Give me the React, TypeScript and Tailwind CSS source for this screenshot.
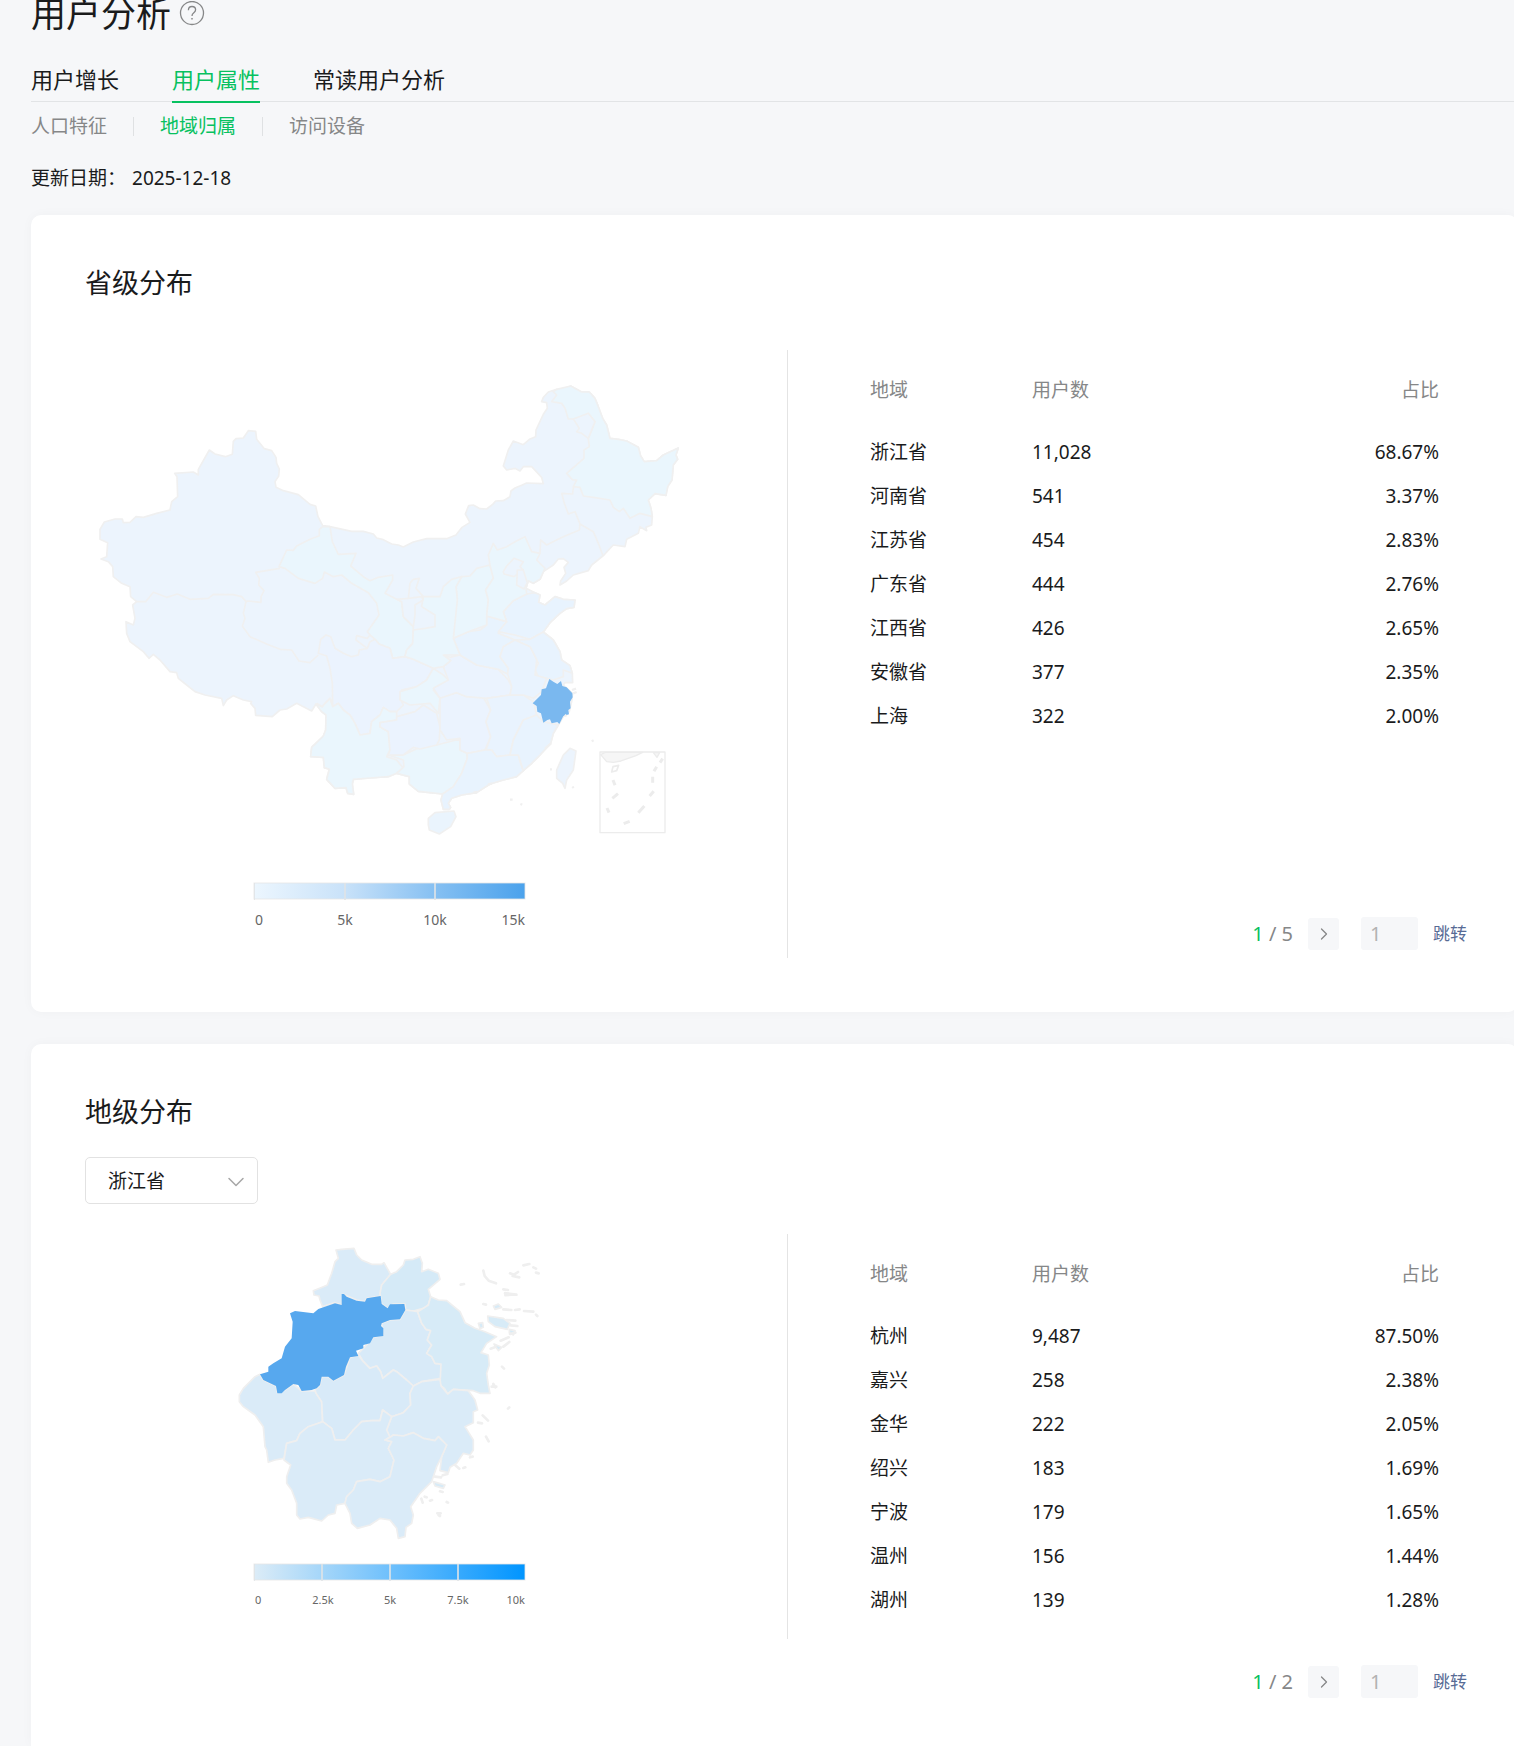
import { useState } from "react"
import { ChevronDown, ChevronRight } from "lucide-react"

type Region = { name: string; users: string; share: string }
type Shape = { name: string; fill: string; points: string }
type Tick = { x: number; label: string; anchor: "start" | "middle" | "end" }

const provinces: Region[] = [
  { name: "浙江省", users: "11,028", share: "68.67%" },
  { name: "河南省", users: "541", share: "3.37%" },
  { name: "江苏省", users: "454", share: "2.83%" },
  { name: "广东省", users: "444", share: "2.76%" },
  { name: "江西省", users: "426", share: "2.65%" },
  { name: "安徽省", users: "377", share: "2.35%" },
  { name: "上海", users: "322", share: "2.00%" },
]

const cities: Region[] = [
  { name: "杭州", users: "9,487", share: "87.50%" },
  { name: "嘉兴", users: "258", share: "2.38%" },
  { name: "金华", users: "222", share: "2.05%" },
  { name: "绍兴", users: "183", share: "1.69%" },
  { name: "宁波", users: "179", share: "1.65%" },
  { name: "温州", users: "156", share: "1.44%" },
  { name: "湖州", users: "139", share: "1.28%" },
]

const mainland =
  "60,478 73,456 105,447 127,447 130,458 150,457 168,440 190,442 230,430 270,420 275,395 293,380 291,320 284,310 340,306 355,315 355,298 388,240 405,252 436,260 457,253 460,214 468,206 490,204 505,182 527,184 530,208 553,236 575,242 588,262 590,280 598,297 596,318 585,335 588,352 610,362 655,374 690,403 707,408 714,440 728,467 750,470 815,484 850,484 880,492 890,504 910,509 935,522 955,525 970,531 1000,516 1040,506 1100,506 1128,495 1145,473 1170,457 1156,432 1166,407 1180,405 1200,416 1220,417 1238,403 1247,393 1270,392 1290,380 1293,363 1305,354 1325,346 1340,339 1390,341 1385,322 1355,290 1330,290 1320,303 1305,295 1280,300 1270,288 1285,240 1300,213 1330,224 1350,207 1367,200 1368,180 1390,133 1402,115 1400,98 1385,95 1390,82 1405,66 1430,58 1460,54 1472,48 1490,58 1505,66 1528,66 1545,85 1555,110 1568,145 1580,165 1590,205 1615,208 1640,213 1675,232 1682,258 1693,275 1730,272 1750,255 1795,234 1788,255 1793,268 1780,285 1776,330 1763,350 1758,376 1725,371 1705,390 1713,415 1717,440 1715,465 1698,472 1700,482 1680,470 1675,490 1640,508 1635,530 1600,525 1590,535 1572,555 1535,585 1525,602 1480,615 1460,633 1440,645 1442,633 1457,610 1452,592 1465,577 1450,566 1435,567 1420,585 1390,605 1380,628 1360,640 1345,632 1338,655 1365,668 1380,675 1376,697 1395,705 1425,680 1450,688 1485,690 1482,712 1460,716 1440,730 1410,758 1390,786 1420,810 1440,845 1445,870 1470,887 1477,910 1478,938 1455,938 1450,945 1478,970 1475,995 1468,1025 1450,1040 1435,1065 1420,1090 1412,1120 1380,1155 1355,1180 1330,1202 1310,1220 1270,1230 1230,1242 1190,1268 1145,1275 1115,1285 1105,1300 1112,1312 1108,1318 1090,1318 1083,1290 1088,1272 1050,1268 1015,1264 988,1242 988,1220 950,1210 925,1220 870,1224 820,1228 817,1242 821,1273 803,1270 798,1253 765,1255 740,1228 748,1198 733,1193 730,1162 692,1160 695,1132 730,1098 737,1080 738,1035 725,1025 708,1002 695,1023 650,1000 620,1017 600,1020 577,1040 527,1036 525,1015 512,1000 515,995 490,990 460,977 440,990 430,1007 425,985 375,975 345,965 320,945 295,925 290,908 270,905 240,870 220,853 207,865 190,845 150,815 140,790 138,755 160,765 165,745 158,705 170,695 152,680 150,650 125,640 100,620 98,590 85,575 63,567 80,560 83,518 60,508"

const provinceShapes: Shape[] = [
  { name: "甘肃", fill: "#eaf6fd", points: "728,470 718,478 718,497 690,508 650,528 640,541 620,540 597,590 615,595 655,625 705,640 728,625 733,606 760,620 785,615 815,640 865,668 890,700 897,735 862,785 870,795 885,808 897,822 930,835 938,865 975,860 980,840 998,820 1000,770 970,740 965,695 950,688 915,670 938,630 938,615 895,622 870,632 850,620 812,588 828,550 775,553 757,515 750,470" },
  { name: "四川", fill: "#ebf3fe", points: "738,795 752,800 765,835 790,850 815,860 835,855 838,840 862,835 870,815 885,808 897,822 930,835 938,865 975,860 1000,868 1060,895 1040,930 1010,950 965,960 960,985 970,1005 950,1025 930,1025 910,1012 900,1035 875,1055 870,1090 840,1095 825,1060 810,1035 790,1020 775,1000 758,1010 757,940 750,895 740,858 715,850 722,808" },
  { name: "云南", fill: "#eaf6fd", points: "708,1002 725,1025 738,1035 737,1080 730,1098 695,1132 692,1160 730,1162 733,1193 748,1198 740,1228 765,1255 798,1253 803,1270 821,1273 817,1242 820,1228 870,1224 925,1220 950,1210 970,1195 950,1170 920,1160 930,1140 925,1085 900,1070 900,1058 950,1050 950,1025 930,1025 910,1012 900,1035 875,1055 870,1090 840,1095 825,1060 810,1035 790,1020 775,1000 758,1010 750,985 735,1000 727,1010" },
  { name: "广西", fill: "#eaf6fd", points: "925,1155 970,1170 972,1190 950,1210 988,1220 988,1242 1015,1264 1050,1268 1088,1272 1120,1250 1145,1210 1162,1165 1160,1150 1140,1140 1140,1107 1070,1125 1020,1132 970,1155" },
  { name: "贵州", fill: "#ebf3fe", points: "925,1155 970,1155 1000,1132 1020,1137 1070,1125 1078,1110 1080,1070 1070,1030 1030,1005 1005,1025 950,1040 950,1050 900,1058 900,1070 925,1085 930,1140" },
  { name: "重庆", fill: "#eaf6fd", points: "1060,895 1090,915 1105,930 1100,942 1060,960 1080,985 1075,1030 1050,1000 990,1005 960,990 960,965 1010,950 1040,930" },
  { name: "湖南", fill: "#ebf3fe", points: "1080,980 1130,968 1160,980 1210,982 1232,1020 1218,1055 1232,1100 1215,1140 1162,1150 1140,1140 1140,1105 1100,1110 1080,1080" },
  { name: "湖北", fill: "#ebf3fe", points: "1090,855 1110,862 1140,855 1190,885 1255,898 1285,930 1295,950 1290,975 1220,985 1160,980 1130,968 1080,985 1060,955 1105,930 1090,890 1112,872" },
  { name: "江西", fill: "#e9f3fe", points: "1220,985 1290,975 1330,975 1360,995 1370,1035 1330,1050 1300,1110 1290,1155 1250,1160 1235,1140 1218,1140 1232,1100 1218,1055 1232,1020" },
  { name: "广东", fill: "#e8f3fe", points: "1235,1140 1215,1140 1162,1150 1162,1165 1145,1210 1120,1250 1088,1272 1083,1290 1090,1318 1108,1318 1112,1312 1105,1300 1115,1285 1145,1275 1190,1268 1230,1242 1270,1230 1310,1220 1330,1202 1320,1175 1315,1155 1290,1155 1250,1160" },
  { name: "福建", fill: "#e8f3fe", points: "1370,1035 1330,1050 1300,1110 1290,1155 1315,1155 1330,1202 1355,1180 1380,1155 1412,1120 1420,1090 1435,1065 1390,1055" },
  { name: "河南", fill: "#e8f3fe", points: "1120,805 1165,785 1200,780 1220,765 1220,738 1280,755 1255,790 1305,810 1270,830 1260,860 1285,895 1283,912 1255,898 1190,885 1140,855" },
  { name: "山东", fill: "#e8f3fe", points: "1280,755 1270,725 1300,692 1340,672 1365,668 1380,675 1376,697 1395,705 1425,680 1450,688 1485,690 1482,712 1460,716 1440,730 1410,758 1390,786 1350,808 1305,795 1255,785" },
  { name: "江苏", fill: "#e8f3fe", points: "1305,810 1350,808 1390,786 1420,810 1440,845 1445,870 1470,887 1477,910 1450,900 1450,920 1420,930 1375,920 1365,900 1375,880 1370,870 1350,830" },
  { name: "安徽", fill: "#e9f3fe", points: "1305,810 1350,830 1370,870 1365,915 1400,925 1385,965 1360,985 1330,975 1290,975 1295,950 1283,912 1285,895 1260,860 1270,830" },
  { name: "山西", fill: "#eaf6fd", points: "1145,620 1170,618 1190,595 1230,585 1240,625 1217,660 1225,690 1220,738 1220,765 1165,785 1120,805 1122,740 1132,690 1128,650" },
  { name: "陕西", fill: "#eaf6fd", points: "1145,620 1128,650 1132,690 1120,805 1140,855 1090,855 1112,872 1090,890 1060,895 1000,868 975,860 980,840 998,820 1000,780 1035,775 1065,770 1065,735 1025,710 1030,680 1080,680 1090,650 1115,628" },
  { name: "宁夏", fill: "#ecf4fd", points: "950,688 985,685 1025,680 1030,690 1005,705 1005,735 1000,770 970,740 965,695" },
  { name: "河北", fill: "#eaf6fd", points: "1240,520 1252,540 1280,530 1305,515 1335,500 1355,545 1380,550 1370,570 1395,595 1380,628 1360,640 1345,632 1338,655 1340,672 1300,692 1270,725 1280,755 1220,738 1225,690 1217,660 1240,625 1230,585 1225,555" },
  { name: "北京", fill: "#ecf4fd", points: "1270,605 1280,588 1302,565 1330,575 1320,590 1330,600 1302,620 1272,612" },
  { name: "天津", fill: "#ecf4fd", points: "1312,600 1330,600 1342,638 1332,657 1310,645" },
  { name: "黑龙江", fill: "#eaf6fd", points: "1420,65 1430,75 1415,95 1445,100 1455,115 1465,147 1480,147 1505,143 1525,130 1545,155 1525,205 1528,230 1512,240 1512,265 1460,310 1478,330 1490,330 1480,350 1500,352 1510,378 1540,382 1590,390 1600,412 1618,425 1630,415 1650,445 1680,430 1717,440 1713,415 1705,390 1725,371 1758,376 1763,350 1776,330 1780,285 1793,268 1788,255 1795,234 1750,255 1730,272 1693,275 1682,258 1675,232 1640,213 1615,208 1590,205 1580,165 1568,145 1555,110 1545,85 1528,66 1505,66 1490,58 1472,48 1430,58" },
  { name: "大兴安岭", fill: "#ecf4fd", points: "1480,147 1525,130 1545,155 1525,205 1505,190 1490,185 1498,175" },
]

const provinceBorders = [
  "600,595 527,607 538,625 536,645 552,662 543,680 543,697 505,693 498,695",
  "170,695 197,695 220,667 260,682 292,672 330,688 385,685 400,673 460,674 485,680 498,695 490,730 495,745 487,768 510,800 560,822 600,838 635,840 657,873 690,878 715,855",
  "862,835 828,810 830,797 862,805 870,795",
  "757,1000 750,985 735,1000 727,1010 710,1000",
  "1480,350 1478,372 1445,370 1453,400 1465,432 1485,425 1500,462 1540,485 1555,520 1568,555",
  "1500,462 1498,480 1450,500 1425,512 1400,525 1382,510 1380,550",
  "985,685 990,640 1000,628 1018,625 1008,655 1030,680",
]

const zhejiangShapes: Shape[] = [
  { name: "湖州", fill: "#daebf8", points: "348,60 365,58 402,55 410,75 425,90 455,103 485,103 492,98 500,112 512,133 485,165 480,198 440,205 435,215 410,210 370,193 365,225 345,218 308,230 300,210 297,198 282,195 280,182 310,170 322,165 335,130 345,95 355,85" },
  { name: "嘉兴", fill: "#d5eaf7", points: "512,133 530,125 550,105 555,90 580,88 600,80 607,100 605,125 625,118 655,130 660,148 625,178 632,200 625,225 610,235 580,243 557,240 555,222 520,222 503,235 485,222 480,190 485,165" },
  { name: "绍兴", fill: "#d8eaf8", points: "556,240 580,243 593,245 605,280 618,298 632,302 622,330 635,345 620,370 635,380 645,400 663,402 663,445 605,455 580,468 560,450 530,425 520,420 488,445 482,425 470,408 450,415 430,395 415,370 430,355 460,322 490,315 485,280 510,270 540,268" },
  { name: "宁波", fill: "#d7ebf7", points: "593,245 610,235 625,225 632,200 655,210 680,212 720,245 735,278 765,295 795,305 830,320 800,340 783,368 805,375 808,405 800,430 805,465 810,490 780,490 760,482 700,478 683,492 673,475 660,465 663,402 645,400 635,380 620,370 635,345 622,330 632,302 618,298 605,280" },
  { name: "衢州", fill: "#daebf8", points: "120,433 130,450 168,468 172,488 195,480 220,462 245,483 285,483 305,515 308,575 265,590 240,610 230,632 200,640 192,685 165,690 145,697 140,660 135,650 130,590 105,555 70,530 58,515 58,495 70,475 90,455 105,440" },
  { name: "金华", fill: "#d8eaf8", points: "285,480 300,465 305,440 325,440 340,452 372,435 390,382 415,375 430,395 450,415 470,408 482,425 488,445 520,420 530,425 560,450 580,468 570,490 572,525 550,548 515,560 488,540 480,572 455,572 425,575 400,600 375,630 345,630 335,595 308,575 305,515 288,490" },
  { name: "台州", fill: "#daebf8", points: "580,468 605,455 660,448 663,468 683,492 700,478 745,482 765,510 773,540 760,545 760,578 735,590 760,630 760,660 750,675 730,670 710,700 690,712 685,728 660,722 665,680 680,645 655,620 645,632 610,625 580,608 550,618 520,615 510,622 500,600 515,560 550,548 572,525 570,490" },
  { name: "丽水", fill: "#daebf8", points: "308,575 335,595 345,630 375,630 400,600 425,575 455,572 480,572 488,540 515,560 500,600 510,622 495,630 515,635 505,655 522,690 510,740 480,755 450,748 410,755 400,780 380,800 375,820 350,825 345,850 325,855 305,873 265,862 240,867 230,855 230,820 215,780 200,760 200,740 212,705 192,690 200,640 230,632 240,610 265,590" },
  { name: "温州", fill: "#daebf8", points: "520,615 550,618 580,608 610,625 645,632 655,620 680,645 665,680 650,710 635,755 600,790 572,830 580,855 575,880 558,892 555,920 535,925 530,895 510,870 480,865 450,885 412,895 395,880 390,850 375,820 380,800 400,780 410,755 450,748 480,755 510,740 522,690 505,655 515,635 495,630 510,622" },
  { name: "杭州", fill: "#57a8ee", points: "365,192 372,192 380,200 410,212 435,215 440,205 482,198 485,222 503,235 510,223 553,222 556,240 540,268 510,270 485,280 483,288 490,295 490,318 460,322 450,340 430,345 430,355 408,362 415,378 390,382 378,410 372,435 340,452 325,440 305,440 300,465 290,475 275,480 245,483 235,465 220,462 195,480 185,490 172,490 168,468 130,450 120,433 145,425 145,410 160,400 185,385 195,350 215,325 218,275 210,250 225,243 280,250 295,237 345,220 365,225" },
]

const zhejiangIslands = [
  "803,258 850,265 870,280 862,298 825,290 805,275",
  "820,228 835,222 845,232 825,238",
  "775,280 788,278 790,292 780,296",
  "822,342 845,352 835,362",
  "868,298 885,302 880,315 868,308",
  "855,188 890,195 855,197",
  "640,755 675,765 670,775 645,768",
]

const zhejiangSpecks =
  "M790 122l4 16 12 14 22 8 M722 164l10-2 M850 178l14 2 M870 130l12 4 12-8 M878 138l20 4 M910 106l18-4 M940 112l8 4 M948 128l8 2 M855 190l34 4 M850 238l24 2 M885 240l14-2 M912 243l28 2 M948 254l4 4 M790 222l8 2 M860 270l26 2 M872 286l20 2 M870 312l16-4 M842 332l24-10 M850 350l18-14 M812 356l12-4 M846 410l6 6 M815 470l14 0 M820 462l6 10 M864 536l4-4 M788 556l16 16 M774 578l12 2 M798 620l8 14 M750 682l8-2 M706 706l12 10 M730 714l6-2 M645 740l18 2 M668 736l14-4 M660 784l8 2 M630 812l6-2 M604 806l4 12 M680 816l4 2 M614 800l6 2 M652 850l10 0 M656 856l4 2"

const hint = "text-[#868788]"

function HelpIcon() {
  return (
    <svg viewBox="0 0 26 26" className="size-[26px]" fill="none" stroke="#868788" strokeWidth="1.3" aria-hidden="true">
      <circle cx="13" cy="12" r="11.5" />
      <path d="M9.4 9.2c0-2.2 1.5-3.7 3.6-3.7s3.6 1.4 3.6 3.3c0 1.5-.8 2.3-2 3.2-1.1.8-1.6 1.5-1.6 3" />
      <circle cx="13" cy="17.8" r="0.5" fill="#868788" strokeWidth="0.8" />
    </svg>
  )
}

function Legend({ y, stops, ticks, small }: { y: number; stops: string[]; ticks: Tick[]; small?: boolean }) {
  const id = `legend-${y}`
  const step = 271 / (ticks.length - 1)
  return (
    <g>
      <linearGradient id={id}>
        {stops.map((color, i) => (
          <stop key={i} offset={i / (stops.length - 1)} stopColor={color} />
        ))}
      </linearGradient>
      <rect x="254" y={y} width="271" height="16" fill={`url(#${id})`} stroke="#e6e6e6" strokeOpacity="0.8" />
      {ticks.map((tick, i) => (
        <g key={tick.label}>
          {i < ticks.length - 1 && (
            <rect x={Math.floor(254 + step * i)} y={y} width={i === 0 ? 1 : 2} height="17" fill="#e0e3e6" fillOpacity="0.8" />
          )}
          <text
            x={tick.x}
            y={small ? y + 40 : y + 42}
            textAnchor={tick.anchor}
            fill="#666666"
            className={small ? "text-[11px]" : "text-[14px]"}
          >
            {tick.label}
          </text>
        </g>
      ))}
    </g>
  )
}

function ChinaMap() {
  return (
    <svg viewBox="85 350 660 608" className="block w-[660px] max-w-full" role="img" aria-label="省级分布地图">
      <g transform="translate(80 370) scale(0.33333)" stroke="#f0f0f0" strokeWidth="5" strokeLinejoin="round">
        <polygon points={mainland} fill="#ecf4fd" />
        {provinceShapes.map((shape) => (
          <polygon key={shape.name} points={shape.points} fill={shape.fill} />
        ))}
        {provinceBorders.map((points, i) => (
          <polyline key={i} points={points} fill="none" />
        ))}
        <polygon
          fill="#7ab8ef"
          stroke="none"
          points="1408,927 1420,935 1432,942 1443,933 1447,948 1460,952 1477,970 1478,982 1470,995 1472,1015 1465,1020 1467,1033 1450,1038 1438,1062 1432,1056 1415,1060 1410,1048 1402,1050 1390,1058 1383,1030 1372,1025 1370,1008 1358,1000 1383,975 1385,958 1398,955"
        />
        <polygon points="1470,1135 1488,1143 1480,1200 1460,1230 1455,1255 1448,1240 1430,1225 1430,1200 1450,1155" fill="#ecf4fd" />
        <polygon points="1045,1365 1045,1345 1065,1328 1122,1323 1128,1340 1112,1370 1078,1392 1048,1380" fill="#eaf4fd" />
        <path
          d="M1476 960l12-4 M1480 970l10-4 M1410 1198l6 0 M1477 1250l4 4 M1535 1114l6-3 M1290 1289l8 0 M1321 1302l6 2 M1395 1136l18-16 M1224 1244l12-4 M1180 1268l12-2 M1455 1040l4-6"
          fill="none"
          strokeWidth="7"
        />
        <g transform="translate(900 630)" fill="none" stroke="#ececec">
          <rect x="660" y="516" width="195" height="242" strokeWidth="4" />
          <path d="M662 524l14-7h112l-20 10-45 16-23 4-20-2z M820 518l11 14 8-14z" fill="#f6f6f6" strokeWidth="4" />
          <path d="M699 560l17-4-6 16-15 4z" />
          <path
            strokeWidth="9"
            d="M848 536l-8 12 M830 560l-8 14 M818 590v18 M821 634l-12 14 M793 678l-18 20 M749 724l-18 7 M687 698l-6-14 M697 655l17-14 M705 616l-6-16"
          />
        </g>
      </g>
      <Legend
        y={883}
        stops={["#ecf6fe", "#c9e2f9", "#86c0f2", "#4ba2ec"]}
        ticks={[
          { x: 255, label: "0", anchor: "start" },
          { x: 345, label: "5k", anchor: "middle" },
          { x: 435, label: "10k", anchor: "middle" },
          { x: 525, label: "15k", anchor: "end" },
        ]}
      />
    </svg>
  )
}

function ZhejiangMap() {
  return (
    <svg viewBox="85 1234 660 405" className="block w-[660px] max-w-full" role="img" aria-label="地级分布地图">
      <g transform="translate(220 1230) scale(0.33333)" stroke="#efefef" strokeWidth="5" strokeLinejoin="round">
        {zhejiangShapes.map((shape) => (
          <polygon key={shape.name} points={shape.points} fill={shape.fill} stroke={shape.name === "杭州" ? "none" : "#efefef"} />
        ))}
        {zhejiangIslands.map((points) => (
          <polygon key={points} points={points} fill="#d7ebf7" />
        ))}
        <path d={zhejiangSpecks} fill="none" strokeWidth="8" strokeLinecap="round" />
      </g>
      <Legend
        small
        y={1564}
        stops={["#dcecf7", "#a5d6f9", "#6fc0fc", "#38aafd", "#0095ff"]}
        ticks={[
          { x: 255, label: "0", anchor: "start" },
          { x: 323, label: "2.5k", anchor: "middle" },
          { x: 390, label: "5k", anchor: "middle" },
          { x: 458, label: "7.5k", anchor: "middle" },
          { x: 525, label: "10k", anchor: "end" },
        ]}
      />
    </svg>
  )
}

function RegionTable({ rows }: { rows: Region[] }) {
  return (
    <table className="w-full table-fixed text-[19px] leading-7">
      <thead>
        <tr className={`h-[54px] align-top ${hint}`}>
          <th className="w-[162px] text-left font-normal">地域</th>
          <th className="text-left font-normal">用户数</th>
          <th className="text-right font-normal">占比</th>
        </tr>
      </thead>
      <tbody>
        {rows.map((row) => (
          <tr key={row.name} className="h-11">
            <td>{row.name}</td>
            <td>{row.users}</td>
            <td className="text-right">{row.share}</td>
          </tr>
        ))}
      </tbody>
    </table>
  )
}

function Pager({ total, label }: { total: number; label: string }) {
  const [target, setTarget] = useState("1")
  return (
    <div className="flex items-center justify-end">
      <span className={`text-[20px] leading-8 ${hint}`}>
        <span className="text-[#07c160]">1</span> / {total}
      </span>
      <button type="button" aria-label="下一页" className="ml-[15px] flex h-8 w-[31px] items-center justify-center rounded-[3px] bg-[#f6f7f9] text-[#868788]">
        <ChevronRight size={20} strokeWidth={1.5} />
      </button>
      <input
        aria-label={label}
        value={target}
        onChange={(e) => setTarget(e.target.value)}
        className="ml-[22px] h-[33px] w-[57px] rounded-[3px] bg-[#f6f7f9] px-[9px] text-[20px] text-[#b2b2b2] outline-none"
      />
      <a href="#jump" className="ml-[15px] text-[17px] leading-8 text-[#576b95]">
        跳转
      </a>
    </div>
  )
}

const card = "bg-white pr-[51px] pl-[54px] shadow-[0_0_12px_rgba(0,0,0,0.03)]"
const columns = "grid grid-cols-[703fr_679fr]"

export default function App() {
  const [province, setProvince] = useState("浙江省")

  return (
    <div className="min-h-screen overflow-x-hidden bg-[#f6f7f9] font-['Noto_Sans','Noto_Sans_CJK_SC',sans-serif] text-[#1a1b1c]">
      <main className="-mr-1 flex min-h-screen flex-col pl-[31px]">
        <header className="flex h-7 items-center gap-2">
          <h1 className="text-[35px] leading-7">用户分析</h1>
          <button type="button" aria-label="帮助">
            <HelpIcon />
          </button>
        </header>

        <nav className="mt-9 flex gap-[53px] border-b border-[#e2e4e6] text-[22px] leading-[30px]">
          <a href="#growth" className="-mb-0.5 border-b-2 border-transparent pb-[7px]">
            用户增长
          </a>
          <a href="#attributes" className="-mb-0.5 border-b-2 border-[#07c160] pb-[7px] text-[#07c160]">
            用户属性
          </a>
          <a href="#readers" className="-mb-0.5 border-b-2 border-transparent pb-[7px]">
            常读用户分析
          </a>
        </nav>

        <nav className={`mt-[10px] flex items-center gap-[26px] text-[19px] leading-7 ${hint}`}>
          <a href="#population">人口特征</a>
          <span className="h-[19px] w-px bg-[#dfe1e3]" />
          <a href="#region" className="text-[#07c160]">
            地域归属
          </a>
          <span className="h-[19px] w-px bg-[#dfe1e3]" />
          <a href="#device">访问设备</a>
        </nav>

        <p className="mt-6 flex gap-[6px] text-[19px] leading-7">
          <span>更新日期：</span>
          <time dateTime="2025-12-18">2025-12-18</time>
        </p>

        <section className={`mt-[23px] rounded-[10px] pt-12 pb-[54px] ${card}`}>
          <h2 className="text-[27px] leading-10">省级分布</h2>
          <div className={`mt-[47px] ${columns}`}>
            <div className="self-start border-r border-[#e4e4e4]">
              <ChinaMap />
            </div>
            <div className="flex flex-col justify-between pt-[26px] pb-2">
              <div className="pr-7 pl-[82px]">
                <RegionTable rows={provinces} />
              </div>
              <Pager total={5} label="省级分布页码" />
            </div>
          </div>
        </section>

        <section className={`mt-8 flex-1 rounded-t-[10px] pt-12 pb-10 ${card}`}>
          <h2 className="text-[27px] leading-10">地级分布</h2>
          <div className="relative mt-[25px] w-[173px]">
            <select
              aria-label="省份"
              value={province}
              onChange={(e) => setProvince(e.target.value)}
              className="block h-[47px] w-full appearance-none rounded-[5px] border border-[#e2e2e2] bg-white px-[22px] text-[19px] leading-7 outline-none"
            >
              {provinces.map((row) => (
                <option key={row.name}>{row.name}</option>
              ))}
            </select>
            <ChevronDown size={28} strokeWidth={1.3} className="pointer-events-none absolute top-[11px] right-2 text-[#a8a8a8]" />
          </div>
          <div className={`mt-[30px] ${columns}`}>
            <div className="self-start border-r border-[#e4e4e4]">
              <ZhejiangMap />
            </div>
            <div className="flex flex-col gap-[43px] pt-[26px]">
              <div className="pr-7 pl-[82px]">
                <RegionTable rows={cities} />
              </div>
              <Pager total={2} label="地级分布页码" />
            </div>
          </div>
        </section>
      </main>
    </div>
  )
}
